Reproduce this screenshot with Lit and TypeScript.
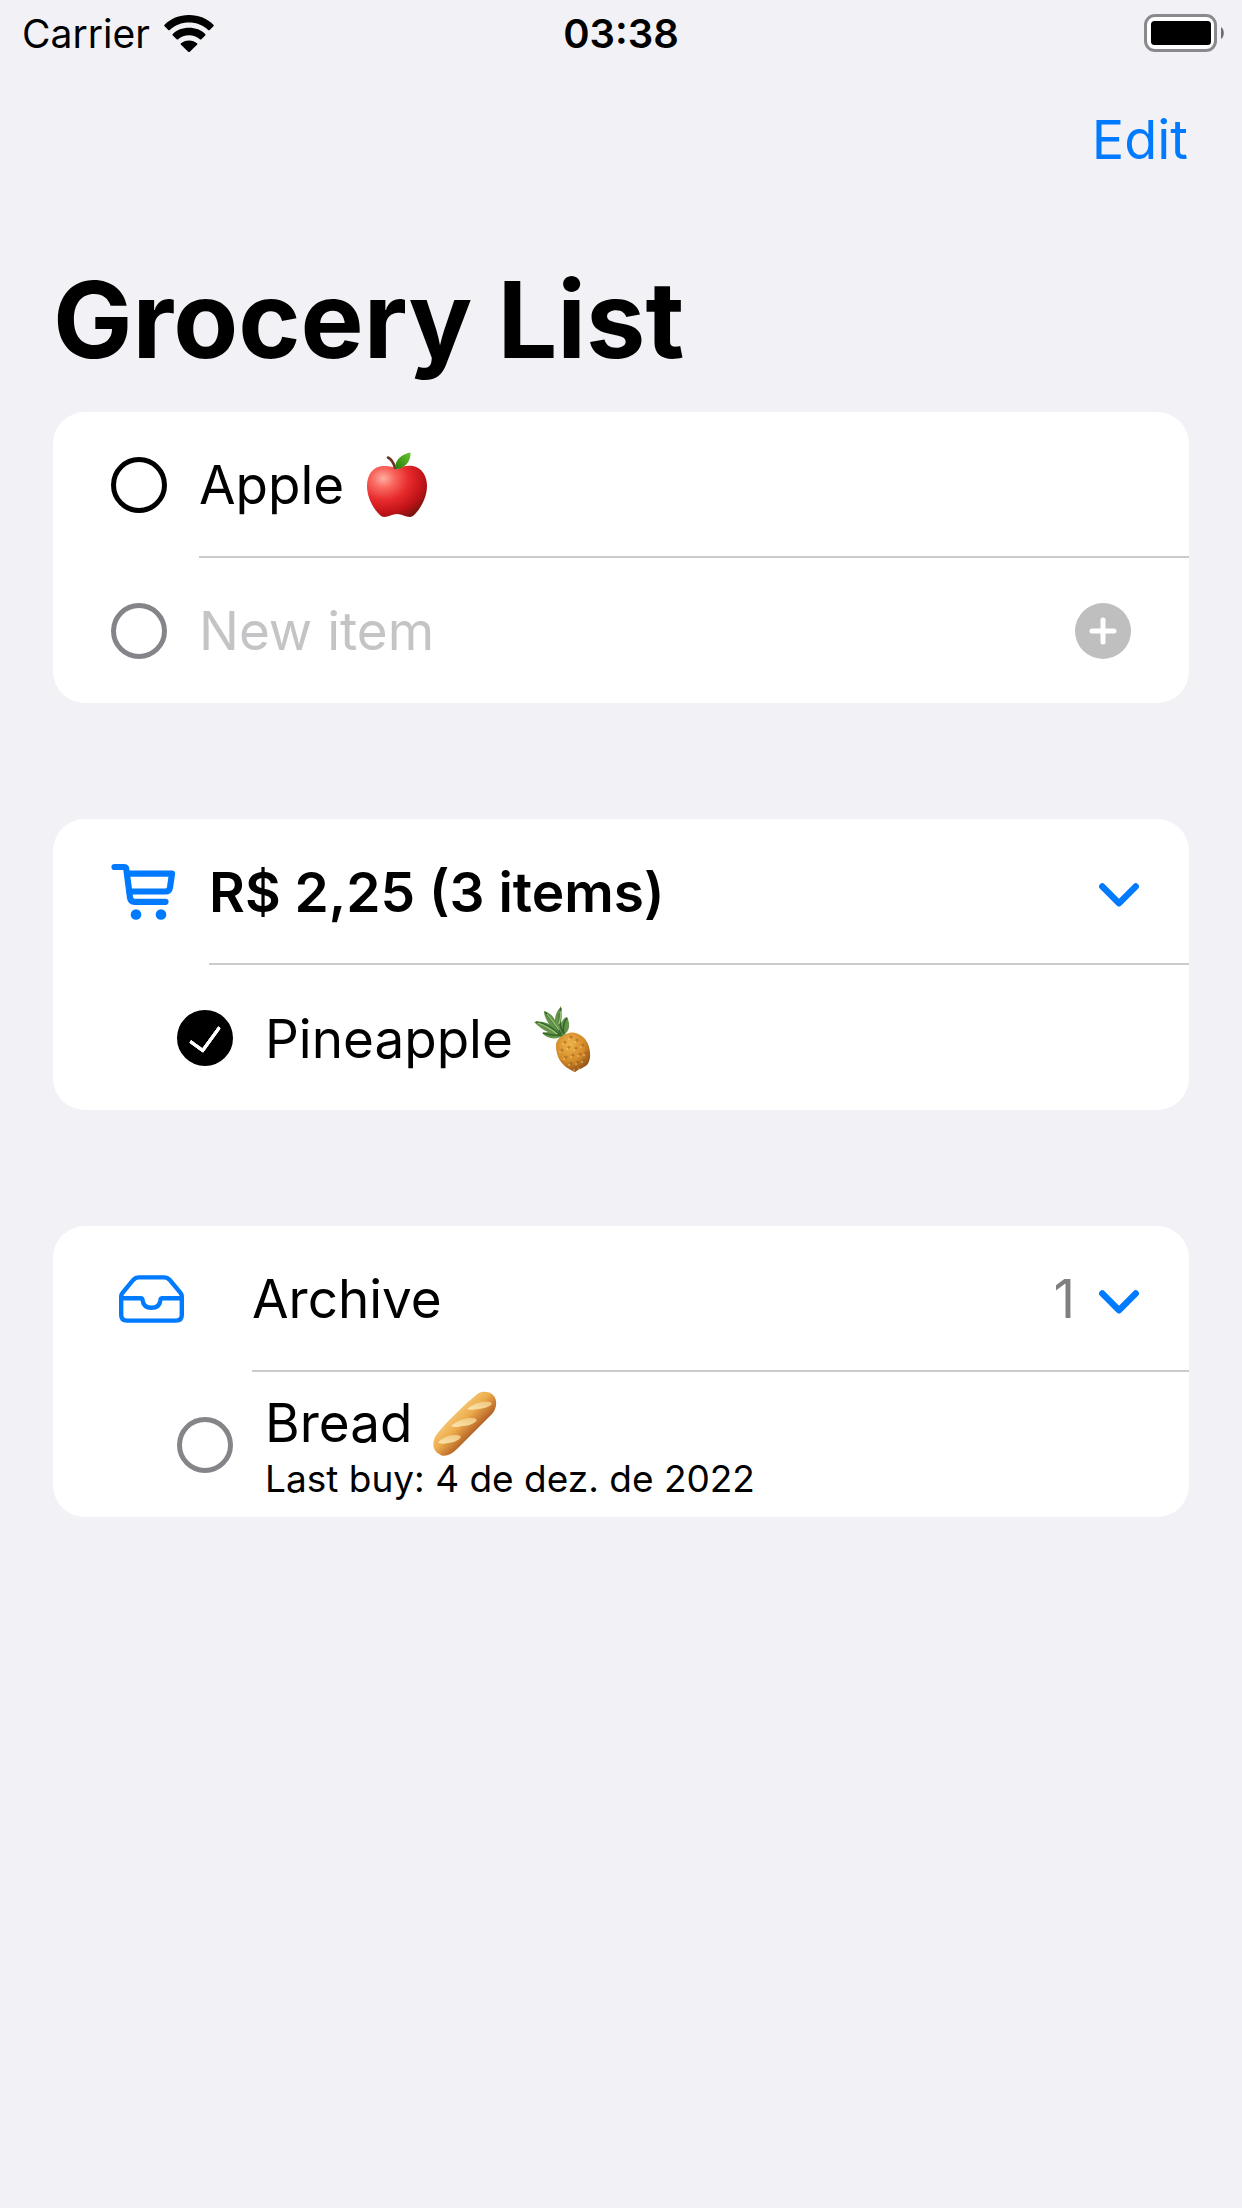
import { LitElement, html, css, svg } from "lit";
import { customElement, state } from "lit/decorators.js";

const wifiIcon = html`<svg class="wifi" viewBox="0 0 50 37" role="img" aria-label="Wi-Fi">
  <path d="M25 0C34.800 0 43.500 3.700 49.400 9.700Q50.200 10.500 49.400 11.300L45.700 15Q45 15.700 44.200 15C39 10.200 32.500 7.600 25 7.600S11 10.200 5.800 15Q5 15.700 4.300 15L.6 11.300Q-.2 10.500.6 9.700C6.500 3.700 15.200 0 25 0Z"/>
  <path d="M25 12.800C31.500 12.800 37.200 15 41.200 18.900Q42 19.700 41.200 20.500L37.400 24.200Q36.600 24.900 35.800 24.200C32.800 21.700 29.200 20.300 25 20.300S17.200 21.700 14.200 24.200Q13.400 24.900 12.600 24.200L8.800 20.500Q8 19.700 8.800 18.900C12.800 15 18.500 12.800 25 12.800Z"/>
  <path d="M25 25.400C28.300 25.400 31 26.500 33 28.200Q33.800 29 33 29.800L25.800 36.800Q25 37.400 24.200 36.800L17 29.800Q16.200 29 17 28.200C19 26.500 21.700 25.400 25 25.400Z"/>
</svg>`;

const batteryIcon = html`<svg class="battery" viewBox="0 0 81 38" role="img" aria-label="Battery full">
  <rect x="1.500" y="1.500" width="70" height="35" rx="9.500" fill="#fff" stroke="#8a8a8e" stroke-width="3"/>
  <rect x="7" y="7" width="60" height="24" rx="3.500"/>
  <path d="M77 13Q79.800 15 79.800 19T77 25Z" fill="#6e6e72"/>
</svg>`;

const cartIcon = html`<svg class="cart" viewBox="0 0 66 58" aria-hidden="true">
  <g fill="none" stroke="#007aff" stroke-width="6.200" stroke-linecap="round" stroke-linejoin="round">
    <path d="M3.500 4H13Q15 4 15.300 6L19 34.500Q19.600 38.800 23.500 38.800H54.500"/>
    <path d="M16.500 10.700H61L59 24.500Q58.300 28.500 54.500 28.500H18.500"/>
  </g>
  <g fill="#007aff"><circle cx="25" cy="51.500" r="5.300"/><circle cx="50" cy="51.500" r="5.300"/></g>
</svg>`;

const trayIcon = html`<svg class="tray" viewBox="0 0 65 48" aria-hidden="true">
  <g fill="none" stroke="#007aff" stroke-width="4.400" stroke-linecap="round" stroke-linejoin="round">
    <path d="M2.200 21.500Q2.200 19.500 3.700 17.700L14.500 4.700Q16.500 2.400 19.500 2.400H45.500Q48.500 2.400 50.500 4.700L61.300 17.700Q62.800 19.500 62.800 21.500V40Q62.800 45.600 57 45.600H8Q2.200 45.600 2.200 40Z"/>
    <path d="M3 23.200H21.500Q23.500 23.200 23.700 25.500Q24.600 32.800 32.500 32.800T41.300 25.500Q41.500 23.200 43.500 23.200H62"/>
  </g>
</svg>`;

const chevron = html`<svg class="chevron" viewBox="0 0 40 24" aria-hidden="true">
  <path d="M3.300 3.500L20 20.300L36.700 3.500" fill="none" stroke="#007aff" stroke-width="6.400" stroke-linecap="round" stroke-linejoin="round"/>
</svg>`;

const appleArt = html`<svg class="art" viewBox="0 0 66 66" role="img" aria-label="apple">
  <defs>
    <radialGradient id="skin" cx=".27" cy=".25" r=".85">
      <stop offset="0" stop-color="#ffaea2"/><stop offset=".22" stop-color="#f8685f"/>
      <stop offset=".5" stop-color="#e82b2c"/><stop offset=".8" stop-color="#bf1217"/><stop offset="1" stop-color="#7c1510"/>
    </radialGradient>
    <linearGradient id="leaf" x1="0" y1="1" x2="1" y2="0">
      <stop offset="0" stop-color="#277d0d"/><stop offset="1" stop-color="#68c52c"/>
    </linearGradient>
  </defs>
  <path d="M33 17C38 14 44 13 49 14C58 16 63 24 63 34C63 45 57 57 49 64C44 67 39 62 33 62S22 67 17 64C9 57 3 45 3 34C3 24 8 16 16 14.500C22 13.500 28 14 33 17Z" fill="url(#skin)"/>
  <path d="M24 5.500Q29 8 31 16" fill="none" stroke="#6b3526" stroke-width="2.600" stroke-linecap="round"/>
  <path d="M31.500 17C30 8 38 2 46.500.5C47 9 41 17 31.500 17Z" fill="url(#leaf)"/>
</svg>`;

const eyes = [[32, 36], [38, 31], [44, 34], [29, 44], [36, 41], [43, 42], [50, 39], [33, 51], [40, 49], [47, 48], [53, 47], [38, 57], [45, 56], [51, 54], [43, 62], [48, 61]];
const pineappleArt = html`<svg class="art" viewBox="0 0 66 66" role="img" aria-label="pineapple">
  <defs>
    <radialGradient id="rind" cx=".4" cy=".3" r=".8">
      <stop offset="0" stop-color="#f0b54a"/><stop offset=".55" stop-color="#d28a2a"/><stop offset="1" stop-color="#7d420f"/>
    </radialGradient>
  </defs>
  <path d="M36 27C44 25 52 31 55 38C58 46 58 54 54 59C50 62 46 63 42 66C37 64 30 60 26 53C23 46 22 39 24 35C27 30 31 28 36 27Z" fill="url(#rind)"/>
  <g opacity=".5">${eyes.map(([x, y]) => svg`<path d="M${x - 2} ${y}l2 -1.500l2 1.500l-2 2z" fill="#a05a18"/><circle cx=${x - 2} cy=${y + 2} r="1" fill="#ffd778"/>`)}</g>
  <path d="M30 30C23 34 14 33 9 27L15 26C10 24 5 20 1 16C7 15 12 16 16 18C13 14 11 9 11 5C17 7 20 10 22 14C22 8 25 4 28 0C29 6 29 12 28 17C30 13 32 11 34 11C37 17 37 23 33 27Z" fill="#64944a"/>
  <path d="M3 16Q17 18 27 29M12 6Q20 15 28 28M28 2Q24 14 30 27M34 12Q29 18 31 28M10 27Q19 30 29 29" fill="none" stroke="#35652c" stroke-width="1.600"/>
  <path d="M5 17Q16 21 24 28M14 8Q22 18 26 24M27 5Q28 11 26 18" fill="none" stroke="#a3c67c" stroke-width="1.200"/>
</svg>`;

const breadArt = html`<svg class="art" viewBox="0 0 66 66" role="img" aria-label="baguette">
  <defs>
    <linearGradient id="crust" gradientUnits="userSpaceOnUse" x1="20" y1="20" x2="45" y2="44">
      <stop offset="0" stop-color="#f6cd7c"/><stop offset=".45" stop-color="#eeac4c"/><stop offset="1" stop-color="#a9531e"/>
    </linearGradient>
    <linearGradient id="score" x1="0" y1="1" x2="1" y2="0">
      <stop offset="0" stop-color="#fbe6b0"/><stop offset="1" stop-color="#eec57c"/>
    </linearGradient>
  </defs>
  <path d="M47 3C52 .5 59 2 62 6C66 12 64 19 60 24L25 59C19 65 12 68 7 64C1 61 0 54 3 47C9 37 38 9 47 3Z" fill="url(#crust)"/>
  <g fill="url(#score)">
    <path d="M35 19Q43 12 53 11.500Q62 11.500 59 15Q54 18.500 46 19Q39 20.500 35 19Z"/>
    <path d="M19 36Q27 29 37 28Q47 27.500 44 31.500Q38 36 30 36Q23 38 19 36Z"/>
    <path d="M6 52.500Q12 46 22 45Q31 44.500 28 48.500Q23 52.500 16 53Q9 54.500 6 52.500Z"/>
  </g>
</svg>`;

@customElement("app-root")
export class AppRoot extends LitElement {
  @state() private draft = "";

  static styles = css`
    :host {
      display: block;
      min-height: 100vh;
      background: #f2f1f6;
      color: #000;
      font-family: Inter, "Liberation Sans", sans-serif;
      font-size: 53px;
      line-height: 66px;
    }
    * { box-sizing: border-box; }
    svg { display: block; flex: none; }
    button, input {
      font: inherit;
      color: inherit;
      margin: 0;
      padding: 0;
      border: 0;
      background: none;
    }
    .status {
      display: grid;
      grid-template-columns: 1fr auto 1fr;
      align-items: center;
      height: 66px;
      padding: 0 17px;
      font-size: 39px;
      line-height: 48px;
    }
    .carrier { display: flex; align-items: center; gap: 14px; padding-left: 5px; }
    .carrier span, .time { padding-top: 2px; }
    .time { font-size: 40px; font-weight: 600; }
    .wifi { width: 50px; height: 37px; }
    .battery { width: 81px; height: 38px; justify-self: end; }
    .nav { display: flex; justify-content: flex-end; padding: 41px 54px 0; }
    .edit { color: #007aff; font-size: 54px; }
    h1 {
      margin: 0;
      padding: 80px 53px 25px;
      font-size: 106px;
      line-height: 134px;
      font-weight: 700;
    }
    main { display: flex; flex-direction: column; gap: 116px; padding: 0 53px; }
    .card { background: #fff; border-radius: 32px; overflow: hidden; }
    .row { display: flex; align-items: center; padding-left: 58px; }
    .row.nested { padding-left: 124px; }
    .body {
      display: flex;
      flex: 1;
      align-items: center;
      min-width: 0;
      min-height: 145px;
      padding-right: 58px;
    }
    .body.ruled { min-height: 146px; border-bottom: 2px solid #cbcbcd; }
    .lead { margin-right: 32px; }
    .check {
      appearance: none;
      display: grid;
      place-items: center;
      width: 56px;
      height: 56px;
      border: 5px solid #000;
      border-radius: 50%;
      background: #fff;
    }
    .check.muted { border-color: #858589; }
    .check:checked { background: #000; }
    .check:checked::before {
      content: "";
      width: 14px;
      height: 27px;
      border: solid #fff;
      border-width: 0 4px 4px 0;
      border-radius: 2px;
      transform: translate(0, -2px) rotate(36deg);
    }
    .label { display: flex; align-items: center; gap: 20px; padding-top: 2px; }
    .art { width: 66px; height: 66px; }
    .entry { flex: 1; min-width: 0; outline: none; }
    .entry::placeholder { color: #c4c4c7; opacity: 1; }
    .add { width: 56px; height: 56px; }
    .plus { width: 56px; height: 56px; }
    .toggle { display: flex; flex: 1; align-items: center; padding-top: 2px; text-align: left; }
    .title { flex: 1; }
    .strong { font-size: 55px; font-weight: 600; }
    .count { color: #808080; margin-right: 24px; }
    .cart { width: 66px; height: 58px; margin-right: 32px; }
    .tray { width: 65px; height: 48px; margin: 0 68px 0 8px; }
    .chevron { width: 40px; height: 24px; margin: 6px -8px 0 0; }
    .stack { display: flex; flex-direction: column; }
    .note { font-size: 37px; line-height: 46px; }
  `;

  private onInput(e: Event) {
    this.draft = (e.target as HTMLInputElement).value;
  }

  render() {
    return html`
      <header>
        <div class="status">
          <div class="carrier"><span>Carrier</span>${wifiIcon}</div>
          <time class="time">03:38</time>
          ${batteryIcon}
        </div>
        <nav class="nav"><button class="edit" type="button">Edit</button></nav>
        <h1>Grocery List</h1>
      </header>
      <main>
        <section class="card">
          <div class="row">
            <input class="check lead" type="checkbox" id="apple" />
            <div class="body ruled"><label class="label" for="apple">Apple ${appleArt}</label></div>
          </div>
          <div class="row">
            <input class="check muted lead" type="checkbox" aria-label="New item done" />
            <div class="body">
              <input class="entry" type="text" aria-label="New item" placeholder="New item" .value=${this.draft} @input=${this.onInput} />
              <button class="add" type="button" aria-label="Add item">
                <svg class="plus" viewBox="0 0 56 56" aria-hidden="true">
                  <circle cx="28" cy="28" r="28" fill="#bfbfbf"/>
                  <path d="M28 17V39M17 28H39" stroke="#fff" stroke-width="5" stroke-linecap="round"/>
                </svg>
              </button>
            </div>
          </div>
        </section>
        <section class="card">
          <div class="row">
            ${cartIcon}
            <div class="body ruled">
              <button class="toggle" type="button" aria-expanded="true"><span class="title strong">R$ 2,25 (3 items)</span>${chevron}</button>
            </div>
          </div>
          <div class="row nested">
            <input class="check lead" type="checkbox" id="pineapple" checked />
            <div class="body"><label class="label" for="pineapple">Pineapple ${pineappleArt}</label></div>
          </div>
        </section>
        <section class="card">
          <div class="row">
            ${trayIcon}
            <div class="body ruled">
              <button class="toggle" type="button" aria-expanded="true"><span class="title">Archive</span><span class="count">1</span>${chevron}</button>
            </div>
          </div>
          <div class="row nested">
            <input class="check muted lead" type="checkbox" id="bread" />
            <div class="body">
              <label class="stack" for="bread">
                <span class="label">Bread ${breadArt}</span>
                <span class="note">Last buy: 4 de dez. de 2022</span>
              </label>
            </div>
          </div>
        </section>
      </main>
    `;
  }
}
